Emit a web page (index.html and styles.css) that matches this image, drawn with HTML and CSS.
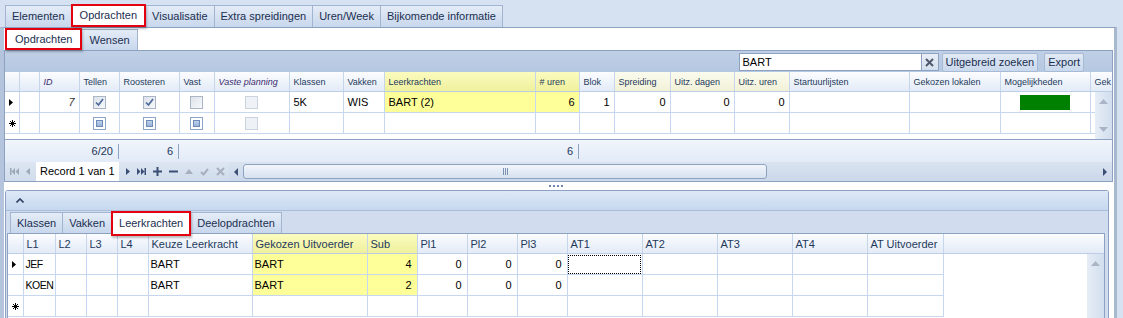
FILE: index.html
```html
<!DOCTYPE html>
<html>
<head>
    <meta charset="utf-8">
    <title>Opdrachten</title>
    <link rel="stylesheet" href="styles.css">
</head>
<body>
    <!-- hoofdtabs -->
    <div class="tabs top-tabs">
        <span class="tab">Elementen</span>
        <span class="tab active marked">Opdrachten</span>
        <span class="tab">Visualisatie</span>
        <span class="tab">Extra spreidingen</span>
        <span class="tab">Uren/Week</span>
        <span class="tab">Bijkomende informatie</span>
    </div>

    <div class="page">
        <div class="tabs sub-tabs">
            <span class="tab active marked">Opdrachten</span>
            <span class="tab">Wensen</span>
        </div>

        <!-- bovenste grid: opdrachten -->
        <div class="grid-panel">
            <div class="toolbar">
                <span class="search-box">BART</span>
                <span class="search-clear">
                    <svg width="9" height="9" viewBox="0 0 9 9"><path d="M1 1L8 8M8 1L1 8" stroke="#4e596b" stroke-width="2"/></svg>
                </span>
                <span class="tool-btn wide">Uitgebreid zoeken</span>
                <span class="tool-btn">Export</span>
            </div>

            <div class="grid-wrap top-grid">
                <table class="grid">
                    <colgroup>
                        <col class="w14"><col class="w20"><col class="w40"><col class="w40"><col class="w60">
                        <col class="w35"><col class="w75"><col class="w54"><col class="w41"><col class="w151">
                        <col class="w44"><col class="w35"><col class="w56"><col class="w64"><col class="w55">
                        <col class="w120"><col class="w91"><col class="w90"><col class="w40">
                    </colgroup>
                    <thead>
                        <tr>
                            <th></th>
                            <th></th>
                            <th class="it">ID</th>
                            <th>Tellen</th>
                            <th>Roosteren</th>
                            <th>Vast</th>
                            <th class="it">Vaste planning</th>
                            <th>Klassen</th>
                            <th>Vakken</th>
                            <th class="yellow">Leerkrachten</th>
                            <th class="yellow"># uren</th>
                            <th>Blok</th>
                            <th class="beige">Spreiding</th>
                            <th class="beige">Uitz. dagen</th>
                            <th class="beige">Uitz. uren</th>
                            <th>Startuurlijsten</th>
                            <th>Gekozen lokalen</th>
                            <th>Mogelijkheden</th>
                            <th>Gek</th>
                        </tr>
                    </thead>
                    <tbody>
                        <tr>
                            <td class="ind"><svg width="4" height="7" viewBox="0 0 4 7"><path d="M0 0L4 3.5L0 7Z" fill="#000"/></svg></td>
                            <td></td>
                            <td class="num it">7</td>
                            <td><span class="cb"><svg width="11" height="11" viewBox="0 0 11 11"><path d="M2 5.5L4.5 8L9 2" fill="none" stroke="#4b6999" stroke-width="1.7"/></svg></span></td>
                            <td><span class="cb"><svg width="11" height="11" viewBox="0 0 11 11"><path d="M2 5.5L4.5 8L9 2" fill="none" stroke="#4b6999" stroke-width="1.7"/></svg></span></td>
                            <td><span class="cb"></span></td>
                            <td><span class="cb faint"></span></td>
                            <td>5K</td>
                            <td>WIS</td>
                            <td class="yellow">BART (2)</td>
                            <td class="yellow num">6</td>
                            <td class="num">1</td>
                            <td class="num">0</td>
                            <td class="num">0</td>
                            <td class="num">0</td>
                            <td></td>
                            <td></td>
                            <td><span class="swatch"></span></td>
                            <td></td>
                        </tr>
                        <tr>
                            <td class="ind"><svg width="7" height="7" viewBox="0 0 7 7"><path d="M3.5 0V7M0 3.5H7M1 1L6 6M6 1L1 6" stroke="#000" stroke-width="1"/></svg></td>
                            <td></td>
                            <td></td>
                            <td><span class="cb new"></span></td>
                            <td><span class="cb new"></span></td>
                            <td><span class="cb new"></span></td>
                            <td><span class="cb faint"></span></td>
                            <td></td>
                            <td></td>
                            <td></td>
                            <td></td>
                            <td></td>
                            <td></td>
                            <td></td>
                            <td></td>
                            <td></td>
                            <td></td>
                            <td></td>
                            <td></td>
                        </tr>
                    </tbody>
                </table>
                <div class="vscroll">
                    <svg width="9" height="5" viewBox="0 0 9 5"><path d="M0 5L4.5 0L9 5Z" fill="#a9b5c7"/></svg>
                    <svg width="9" height="5" viewBox="0 0 9 5"><path d="M0 0L4.5 5L9 0Z" fill="#a9b5c7"/></svg>
                </div>
            </div>

            <div class="summary">
                <span class="sum-cell s1">6/20</span>
                <span class="sum-cell s2">6</span>
                <span class="sum-cell s3">6</span>
            </div>

            <div class="navigator">
                <span class="nav-btn first"><svg width="9" height="7" viewBox="0 0 9 7"><path d="M0 0H1.5V7H0ZM5 0L1.5 3.5L5 7ZM9 0L5.5 3.5L9 7Z" fill="#9ca7b8"/></svg></span>
                <span class="nav-btn"><svg width="4" height="7" viewBox="0 0 4 7"><path d="M4 0L0 3.5L4 7Z" fill="#9ca7b8"/></svg></span>
                <span class="record">Record 1 van 1</span>
                <span class="nav-btn"><svg width="4" height="7" viewBox="0 0 4 7"><path d="M0 0L4 3.5L0 7Z" fill="#3c5076"/></svg></span>
                <span class="nav-btn"><svg width="9" height="7" viewBox="0 0 9 7"><path d="M9 0H7.5V7H9ZM4 0L7.5 3.5L4 7ZM0 0L3.5 3.5L0 7Z" fill="#3c5076"/></svg></span>
                <span class="nav-btn"><svg width="9" height="9" viewBox="0 0 9 9"><path d="M3.5 0H5.5V9H3.5ZM0 3.5H9V5.5H0Z" fill="#3c5076"/></svg></span>
                <span class="nav-btn"><svg width="9" height="9" viewBox="0 0 9 9"><path d="M0 3.5H9V5.5H0Z" fill="#3c5076"/></svg></span>
                <span class="nav-btn"><svg width="8" height="5" viewBox="0 0 8 5"><path d="M0 5L4 0L8 5Z" fill="#a7b0be"/></svg></span>
                <span class="nav-btn"><svg width="9" height="8" viewBox="0 0 9 8"><path d="M1 4L3.5 6.5L8 1" fill="none" stroke="#a7b0be" stroke-width="2"/></svg></span>
                <span class="nav-btn"><svg width="9" height="9" viewBox="0 0 9 9"><path d="M1 1L8 8M8 1L1 8" stroke="#a7b0be" stroke-width="2"/></svg></span>
                <div class="hscroll">
                    <span class="arrow"><svg width="4" height="8" viewBox="0 0 4 8"><path d="M4 0L0 4L4 8Z" fill="#3c5076"/></svg></span>
                    <span class="thumb"><span class="grip"></span></span>
                    <span class="arrow right"><svg width="4" height="8" viewBox="0 0 4 8"><path d="M0 0L4 4L0 8Z" fill="#3c5076"/></svg></span>
                </div>
            </div>
        </div>

        <div class="splitter"><span></span><span></span><span></span><span></span></div>

        <!-- detailpaneel -->
        <div class="detail-panel">
            <div class="detail-head">
                <svg width="8" height="5" viewBox="0 0 8 5"><path d="M0.5 4.5L4 1L7.5 4.5" fill="none" stroke="#2f4262" stroke-width="1.6"/></svg>
            </div>
            <div class="tabs detail-tabs">
                <span class="tab">Klassen</span>
                <span class="tab">Vakken</span>
                <span class="tab active marked">Leerkrachten</span>
                <span class="tab">Deelopdrachten</span>
            </div>
            <div class="grid-wrap bottom-grid">
                <table class="grid">
                    <colgroup>
                        <col class="w15"><col class="w32"><col class="w31"><col class="w31"><col class="w31">
                        <col class="w104"><col class="w115"><col class="w50"><col class="w50"><col class="w50">
                        <col class="w50"><col class="w75"><col class="w75"><col class="w75"><col class="w75">
                        <col class="w76"><col>
                    </colgroup>
                    <thead>
                        <tr>
                            <th></th>
                            <th>L1</th>
                            <th>L2</th>
                            <th>L3</th>
                            <th>L4</th>
                            <th>Keuze Leerkracht</th>
                            <th class="yellow">Gekozen Uitvoerder</th>
                            <th class="yellow">Sub</th>
                            <th>Pl1</th>
                            <th>Pl2</th>
                            <th>Pl3</th>
                            <th>AT1</th>
                            <th>AT2</th>
                            <th>AT3</th>
                            <th>AT4</th>
                            <th>AT Uitvoerder</th>
                            <th class="filler"></th>
                        </tr>
                    </thead>
                    <tbody>
                        <tr>
                            <td class="ind"><svg width="4" height="7" viewBox="0 0 4 7"><path d="M0 0L4 3.5L0 7Z" fill="#000"/></svg></td>
                            <td class="tight">JEF</td>
                            <td></td>
                            <td></td>
                            <td></td>
                            <td>BART</td>
                            <td class="yellow">BART</td>
                            <td class="yellow num">4</td>
                            <td class="num">0</td>
                            <td class="num">0</td>
                            <td class="num">0</td>
                            <td class="focus"></td>
                            <td></td>
                            <td></td>
                            <td></td>
                            <td></td>
                            <td class="filler"></td>
                        </tr>
                        <tr>
                            <td class="ind"></td>
                            <td class="tight">KOEN</td>
                            <td></td>
                            <td></td>
                            <td></td>
                            <td>BART</td>
                            <td class="yellow">BART</td>
                            <td class="yellow num">2</td>
                            <td class="num">0</td>
                            <td class="num">0</td>
                            <td class="num">0</td>
                            <td></td>
                            <td></td>
                            <td></td>
                            <td></td>
                            <td></td>
                            <td class="filler"></td>
                        </tr>
                        <tr>
                            <td class="ind"><svg width="7" height="7" viewBox="0 0 7 7"><path d="M3.5 0V7M0 3.5H7M1 1L6 6M6 1L1 6" stroke="#000" stroke-width="1"/></svg></td>
                            <td></td>
                            <td></td>
                            <td></td>
                            <td></td>
                            <td></td>
                            <td></td>
                            <td></td>
                            <td></td>
                            <td></td>
                            <td></td>
                            <td></td>
                            <td></td>
                            <td></td>
                            <td></td>
                            <td></td>
                            <td class="filler"></td>
                        </tr>
                    </tbody>
                </table>
                <div class="vscroll">
                    <svg width="9" height="5" viewBox="0 0 9 5"><path d="M0 5L4.5 0L9 5Z" fill="#a9b5c7"/></svg>
                </div>
            </div>
        </div>
    </div>
</body>
</html>
```

FILE: styles.css
```css
body {
  margin: 0;
  height: 318px;
  overflow: hidden;
  background: #d6e2f1;
  font: 11px "Liberation Sans", Arial, sans-serif;
  color: #000;
}

/* tabs */
.tabs {
  display: flex;
  align-items: flex-end;
}

.tab {
  box-sizing: border-box;
  height: 21px;
  line-height: 20px;
  padding: 0 6px;
  margin-right: -1px;
  border: 1px solid #a2b5d0;
  border-bottom: none;
  background: linear-gradient(#e4ecf7, #c8d7ec);
  color: #1b2f50;
  white-space: nowrap;
}

.tab.active {
  background: #fff;
  position: relative;
  z-index: 1;
}

.tab.marked {
  /* rode markering rond het gekozen tabblad */
  border: 2px solid #e3000f;
  line-height: 18px;
  padding: 0 7px;
  box-shadow: 1px 2px 2px rgba(0, 0, 0, .25);
}

.top-tabs {
  height: 27px;
  padding-left: 5px;
  box-sizing: border-box;
}

.top-tabs .tab {
  height: 22px;
}

.top-tabs .tab.marked {
  height: 23px;
  line-height: 19px;
}

.sub-tabs {
  height: 22px;
  padding-left: 1px;
}

.sub-tabs .tab {
  padding: 0 7px;
}

.sub-tabs .tab.marked {
  height: 22px;
  padding: 0 8px;
}

/* witte pagina */
.page {
  width: 1110px;
  height: 290px;
  overflow: hidden;
  border-top: 1px solid #8da2c0;
  border-left: 4px solid #b3c4dc;
  border-right: 3px solid #a8b8cf;
  background: #fff;
}

.grid-panel {
  margin-right: 1px;
  border: 1px solid #8da2c0;
}

.toolbar {
  height: 21px;
  display: flex;
  justify-content: flex-end;
  align-items: flex-start;
  padding: 2px 28px 0 0;
  box-sizing: border-box;
  background: linear-gradient(#bfd0e6, #b5c8e1);
}

.search-box {
  box-sizing: border-box;
  width: 183px;
  height: 18px;
  line-height: 16px;
  padding-left: 3px;
  border: 1px solid #8da2c0;
  background: #fff;
}

.search-clear {
  box-sizing: border-box;
  width: 17px;
  height: 18px;
  display: flex;
  align-items: center;
  justify-content: center;
  border: 1px solid #8da2c0;
  border-left: none;
  background: linear-gradient(#e8eef7, #d4dfee);
}

.tool-btn {
  box-sizing: border-box;
  height: 19px;
  line-height: 17px;
  padding: 0 3px;
  margin-left: 6px;
  border: 1px solid #a7bad5;
  border-radius: 2px;
  background: linear-gradient(#e1e9f5, #c9d8ec);
  color: #1b2f50;
  white-space: nowrap;
}

.tool-btn.wide {
  margin-left: 3px;
}

/* grids */
.grid-wrap {
  position: relative;
  overflow: hidden;
  background: #fff;
}

.top-grid {
  height: 67px;
  border-bottom: 1px solid #8da2c0;
}

.grid {
  border-collapse: collapse;
  table-layout: fixed;
}

.top-grid .grid {
  width: 1125px;
}

.grid th {
  height: 19px;
  padding: 0 4px;
  text-align: left;
  font-weight: normal;
  font-size: 9px;
  color: #1e395b;
  white-space: nowrap;
  overflow: hidden;
  border-right: 1px solid #c5d5ea;
  border-bottom: 1px solid #bccde5;
  background: linear-gradient(#fbfcfe, #e2ebf7);
}

.grid th.it {
  font-style: italic;
  color: #3a2a6e;
}

.grid th.yellow {
  background: linear-gradient(#fbfbbf, #eff09c);
}

.grid th.beige {
  background: linear-gradient(#fbfbee, #f1f1d8);
}

.grid td {
  height: 20px;
  padding: 0 4px;
  white-space: nowrap;
  overflow: hidden;
  border-right: 1px solid #c6d7ef;
  border-bottom: 1px solid #c6d7ef;
}

.grid td.yellow {
  background: #ffff99;
}

.grid td.num {
  text-align: right;
}

.grid td.it {
  font-style: italic;
  color: #333;
}

.grid td.ind {
  padding: 0 0 0 4px;
  line-height: 0;
}

.w14 { width: 14px; }
.w15 { width: 15px; }
.w20 { width: 20px; }
.w31 { width: 31px; }
.w32 { width: 32px; }
.w35 { width: 35px; }
.w40 { width: 40px; }
.w41 { width: 41px; }
.w44 { width: 44px; }
.w50 { width: 50px; }
.w54 { width: 54px; }
.w55 { width: 55px; }
.w56 { width: 56px; }
.w60 { width: 60px; }
.w64 { width: 64px; }
.w75 { width: 75px; }
.w76 { width: 76px; }
.w90 { width: 90px; }
.w91 { width: 91px; }
.w104 { width: 104px; }
.w115 { width: 115px; }
.w120 { width: 120px; }
.w151 { width: 151px; }

/* checkboxes */
.cb {
  display: block;
  box-sizing: border-box;
  width: 13px;
  height: 13px;
  margin: 0 auto;
  border: 1px solid #aab5c5;
  background: linear-gradient(135deg, #dde3ea, #f7f9fb);
}

.cb svg {
  display: block;
}

.cb.faint {
  border-color: #cbd3dd;
  background: #eef1f5;
}

.cb.new {
  padding: 2px;
  border-color: #8ca4c6;
  background: #fff;
}

.cb.new::after {
  content: "";
  display: block;
  height: 100%;
  box-sizing: border-box;
  border: 1px solid #6d8db8;
  background: linear-gradient(#bcd0ea, #97b3da);
}

.swatch {
  display: block;
  width: 50px;
  height: 15px;
  margin: 0 auto;
  background: #008000;
}

.vscroll {
  position: absolute;
  right: 0;
  top: 20px;
  bottom: 0;
  width: 17px;
  display: flex;
  flex-direction: column;
  justify-content: space-between;
  align-items: center;
  padding: 7px 0;
  box-sizing: border-box;
  background: linear-gradient(to right, #e6edf6, #d2deee);
}

/* totalen */
.summary {
  height: 22px;
  display: flex;
  align-items: flex-start;
  background: linear-gradient(#f1f5fc, #e2ebf7);
  color: #22365a;
}

.sum-cell {
  box-sizing: border-box;
  height: 15px;
  line-height: 15px;
  margin-top: 4px;
  padding-right: 5px;
  text-align: right;
  border-right: 1px solid #8ea3c2;
}

.s1 { width: 114px; }
.s2 { width: 60px; }
.s3 { width: 400px; }

/* navigator */
.navigator {
  height: 19px;
  display: flex;
  align-items: center;
  padding-left: 5px;
  background: linear-gradient(#dde6f2, #d0dcec);
}

.nav-btn {
  display: flex;
  align-items: center;
  margin-left: 7px;
}

.nav-btn.first {
  margin-left: 0;
}

.record {
  width: 83px;
  height: 19px;
  line-height: 19px;
  margin-left: 6px;
  padding-left: 4px;
  box-sizing: border-box;
  background: #fff;
  color: #000;
}

.hscroll {
  flex: 1;
  height: 19px;
  margin-left: 4px;
  display: flex;
  align-items: center;
  background: linear-gradient(#d9e3f0, #cbd8ea);
}

.hscroll .arrow {
  width: 14px;
  display: flex;
  justify-content: center;
}

.thumb {
  width: 524px;
  height: 15px;
  box-sizing: border-box;
  border: 1px solid #8ea3c2;
  border-radius: 3px;
  background: linear-gradient(#f2f6fb, #d6e1f0);
  display: flex;
  align-items: center;
  justify-content: center;
}

.grip {
  width: 5px;
  height: 7px;
  background: repeating-linear-gradient(to right, #7d92b0 0 1px, transparent 1px 2px);
}

.hscroll .arrow.right {
  margin-left: auto;
}

/* splitter */
.splitter {
  height: 8px;
  display: flex;
  justify-content: center;
  align-items: center;
  gap: 2px;
  padding-right: 6px;
}

.splitter span {
  width: 2px;
  height: 2px;
  background: #6f88ad;
}

/* detailpaneel */
.detail-panel {
  margin-left: 1px;
  width: 1102px;
  border: 1px solid #8da2c0;
  border-bottom: none;
  border-radius: 3px 3px 0 0;
  background: #d1ddee;
}

.detail-head {
  height: 19px;
  display: flex;
  align-items: center;
  padding-left: 10px;
  border-bottom: 1px solid #a9bdd9;
  background: linear-gradient(#dde8f7, #c6d8ef);
}

.detail-tabs {
  height: 22px;
  padding-left: 4px;
}

.detail-tabs .tab {
  height: 21px;
}

.detail-tabs .tab.marked {
  height: 25px;
  margin-bottom: -3px;
  line-height: 20px;
  padding: 0 6px;
}

.bottom-grid {
  margin: 0 3px 0 1px;
  height: 85px;
  border: 1px solid #8da2c0;
  border-bottom: none;
}

.bottom-grid .grid {
  width: 100%;
}

.bottom-grid .grid th {
  font-size: 11px;
  padding: 0 3px;
}

.bottom-grid .grid td {
  padding: 0 2px;
}

.bottom-grid .grid td.tight {
  /* smalle kolom: namen net passend maken */
  padding: 0 0 0 2px;
  font-size: 10.5px;
  letter-spacing: -0.5px;
}

.bottom-grid .grid td.num {
  padding-right: 5px;
}

.bottom-grid .grid td.ind {
  padding-left: 4px;
}

.bottom-grid th.filler {
  border-right: none;
}

.bottom-grid td.filler {
  border: none;
}

.grid td.focus {
  outline: 1px dotted #000;
  outline-offset: -2px;
}
```
